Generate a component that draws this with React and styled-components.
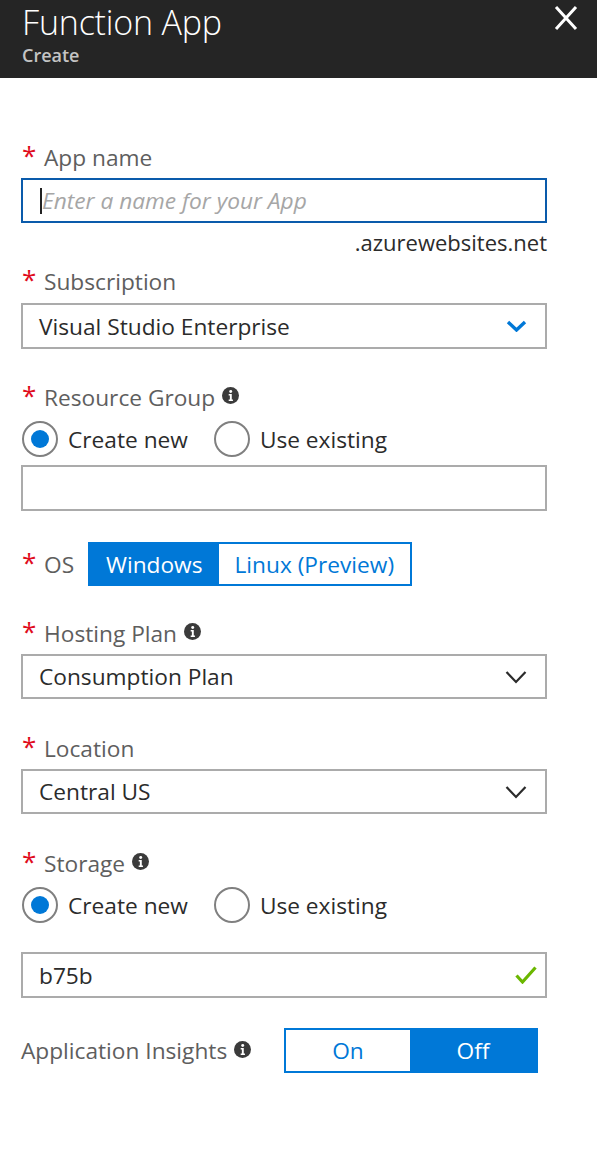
import React from "react";
import styled, { createGlobalStyle } from "styled-components";

const Global = createGlobalStyle`
  html, body { margin: 0; padding: 0; background: #fff; }
  body { font-family: "Open Sans", "Noto Sans", sans-serif; }
  * { box-sizing: border-box; }
`;

const Page = styled.div`
  width: 597px;
  min-height: 1153px;
  background: #fff;
`;

const Header = styled.header`
  height: 78px;
  background: #252525;
  padding: 0 0 0 22px;
  display: flex;
  align-items: flex-start;
  justify-content: space-between;
`;

const TitleBlock = styled.div`
  display: flex;
  flex-direction: column;
`;

const Title = styled.h1`
  margin: 0;
  font-size: 34px;
  font-weight: 300;
  line-height: 44px;
  color: #fff;
  letter-spacing: -0.2px;
`;

const Subtitle = styled.div`
  font-size: 18px;
  font-weight: 600;
  line-height: 22px;
  color: #c4c4c4;
`;

const CloseButton = styled.button`
  border: 0;
  background: transparent;
  padding: 0;
  width: 24px;
  height: 26px;
  margin: 5px 19px 0 0;
  cursor: pointer;
  display: flex;
`;

const Form = styled.div`
  width: 547px;
  padding: 64px 0 0 21px;
  display: flex;
  flex-direction: column;
`;

const Field = styled.div`
  display: flex;
  flex-direction: column;
  margin-top: ${(p) => p.$mt || 0}px;
`;

const Label = styled.div`
  display: flex;
  align-items: center;
  height: 30px;
  margin-bottom: ${(p) => (p.$mb != null ? p.$mb : 6)}px;
  font-size: 22.7px;
  color: #5e5e5e;
  white-space: nowrap;
`;

const Star = styled.span`
  color: #e00b1c;
  font-size: 26px;
  width: 23px;
  align-self: flex-start;
  line-height: 30px;
  margin-top: -2px;
  padding-left: 1px;
`;

const InfoWrap = styled.span`
  display: inline-flex;
  margin-left: 7px;
  margin-top: -3px;
`;

const Box = styled.div`
  height: ${(p) => p.$h || 46}px;
  border: 2px solid ${(p) => (p.$focus ? "#0a5bab" : "#ababab")};
  display: flex;
  align-items: center;
  padding: 0 ${(p) => p.$pr || 18}px 0 16px;
  font-size: 22.7px;
  color: #2b2b2b;
  background: #fff;
`;

const BoxText = styled.span`
  flex: 1;
  white-space: nowrap;
`;

const Placeholder = styled.span`
  font-style: italic;
  color: #a6a6a6;
  flex: 1;
  white-space: nowrap;
`;

const Caret = styled.span`
  width: 2px;
  height: 26px;
  background: #222;
  margin-left: 1px;
`;

const Suffix = styled.div`
  align-self: flex-end;
  font-size: 22px;
  color: #2b2b2b;
  line-height: 26px;
  margin-top: 6px;
`;

const RadioRow = styled.div`
  display: flex;
  align-items: center;
  height: 36px;
  margin-left: 1px;
  margin-bottom: ${(p) => p.$mb || 8}px;
`;

const RadioOption = styled.label`
  display: flex;
  align-items: center;
  margin-right: 26px;
  font-size: 22.7px;
  color: #2b2b2b;
  cursor: pointer;
`;

const RadioCircle = styled.span`
  width: 36px;
  height: 36px;
  border-radius: 50%;
  border: 2px solid #808080;
  display: flex;
  align-items: center;
  justify-content: center;
  margin-right: 10px;
  &::after {
    content: "";
    width: 18px;
    height: 18px;
    border-radius: 50%;
    background: ${(p) => (p.$checked ? "#0078d7" : "transparent")};
  }
`;

const InlineRow = styled.div`
  display: flex;
  align-items: center;
`;

const OsLabel = styled(Label)`
  margin-bottom: 0;
  width: 67px;
`;

const Segmented = styled.div`
  display: flex;
  height: ${(p) => p.$h || 44}px;
  border: 2px solid #0078d7;
`;

const Segment = styled.button`
  border: 0;
  margin: 0;
  font-family: inherit;
  font-size: 22.7px;
  padding: 0 ${(p) => p.$px || 16}px;
  width: ${(p) => (p.$w ? `${p.$w}px` : "auto")};
  background: ${(p) => (p.$active ? "#0078d7" : "#fff")};
  color: ${(p) => (p.$active ? "#fff" : "#0078d7")};
  cursor: pointer;
  display: flex;
  align-items: center;
  justify-content: center;
  white-space: nowrap;
`;

const InsightsLabel = styled(Label)`
  margin-bottom: 0;
  width: 263px;
`;

const InfoIcon = () => (
  <svg width="17" height="17" viewBox="0 0 16 16">
    <circle cx="8" cy="8" r="8" fill="#3b3b3b" />
    <circle cx="8.2" cy="4.2" r="1.4" fill="#fff" />
    <path d="M6.3 6.6h2.9v5.2h1.1v1.4H6.3v-1.4h1.1V8H6.3z" fill="#fff" />
  </svg>
);

const ChevronBlue = () => (
  <svg width="21" height="12" viewBox="0 0 21 12">
    <path d="M2 2l8.5 8 8.5-8" fill="none" stroke="#0078d7" strokeWidth="3.4" />
  </svg>
);

const ChevronDark = () => (
  <svg width="22" height="14" viewBox="0 0 22 14">
    <path d="M1.5 2l9.5 10 9.5-10" fill="none" stroke="#2b2b2b" strokeWidth="2.2" />
  </svg>
);

const Check = () => (
  <svg width="22" height="18" viewBox="0 0 22 18">
    <path d="M1.5 9.5l6 6.5L20.5 1.5" fill="none" stroke="#6bb700" strokeWidth="3.2" />
  </svg>
);

const CloseIcon = () => (
  <svg width="24" height="26" viewBox="0 0 24 26">
    <path d="M2 2l20 22M22 2L2 24" stroke="#fff" strokeWidth="3" />
  </svg>
);

const RequiredLabel = ({ children, info, mb }) => (
  <Label $mb={mb}>
    <Star>*</Star>
    {children}
    {info && (
      <InfoWrap>
        <InfoIcon />
      </InfoWrap>
    )}
  </Label>
);

const Radios = ({ mb }) => (
  <RadioRow $mb={mb}>
    <RadioOption>
      <RadioCircle $checked />
      Create new
    </RadioOption>
    <RadioOption>
      <RadioCircle />
      Use existing
    </RadioOption>
  </RadioRow>
);

export default function App() {
  return (
    <Page>
      <Global />
      <Header>
        <TitleBlock>
          <Title>Function App</Title>
          <Subtitle>Create</Subtitle>
        </TitleBlock>
        <CloseButton aria-label="Close">
          <CloseIcon />
        </CloseButton>
      </Header>

      <Form>
        <Field>
          <RequiredLabel>App name</RequiredLabel>
          <Box $focus $h={45}>
            <Caret />
            <Placeholder>Enter a name for your App</Placeholder>
          </Box>
          <Suffix>.azurewebsites.net</Suffix>
        </Field>

        <Field $mt={11}>
          <RequiredLabel mb={7}>Subscription</RequiredLabel>
          <Box>
            <BoxText>Visual Studio Enterprise</BoxText>
            <ChevronBlue />
          </Box>
        </Field>

        <Field $mt={33}>
          <RequiredLabel mb={9} info>
            Resource Group
          </RequiredLabel>
          <Radios mb={8} />
          <Box />
        </Field>

        <Field $mt={31}>
          <InlineRow>
            <OsLabel>
              <Star>*</Star>OS
            </OsLabel>
            <Segmented>
              <Segment $active $px={16}>
                Windows
              </Segment>
              <Segment $px={16}>Linux (Preview)</Segment>
            </Segmented>
          </InlineRow>
        </Field>

        <Field $mt={32}>
          <RequiredLabel info>Hosting Plan</RequiredLabel>
          <Box $h={45}>
            <BoxText>Consumption Plan</BoxText>
            <ChevronDark />
          </Box>
        </Field>

        <Field $mt={34}>
          <RequiredLabel>Location</RequiredLabel>
          <Box $h={45}>
            <BoxText>Central US</BoxText>
            <ChevronDark />
          </Box>
        </Field>

        <Field $mt={34}>
          <RequiredLabel mb={9} info>
            Storage
          </RequiredLabel>
          <Radios mb={29} />
          <Box $pr={8}>
            <BoxText>b75b</BoxText>
            <Check />
          </Box>
        </Field>

        <Field $mt={30}>
          <InlineRow>
            <InsightsLabel>
              Application Insights
              <InfoWrap>
                <InfoIcon />
              </InfoWrap>
            </InsightsLabel>
            <Segmented $h={45}>
              <Segment $w={124}>On</Segment>
              <Segment $active $w={126}>
                Off
              </Segment>
            </Segmented>
          </InlineRow>
        </Field>
      </Form>
    </Page>
  );
}
